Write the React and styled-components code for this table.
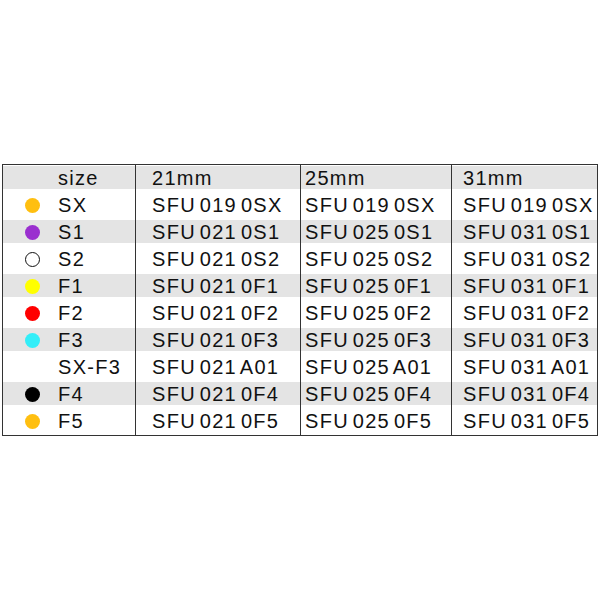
import styled, { createGlobalStyle } from "styled-components";

const GlobalStyle = createGlobalStyle`
  body {
    margin: 0;
    background: #fff;
    font-family: "Liberation Sans", Arial, sans-serif;
  }
`;

const Page = styled.div`
  min-height: 600px;
  display: flex;
  align-items: center;
  justify-content: center;
`;

const Table = styled.div`
  width: 596px;
  box-sizing: border-box;
  border: 1.5px solid #333;
`;

const Row = styled.div`
  display: grid;
  grid-template-columns: 132px 165px 151px 145px;
  height: 27px;
  background: ${({ $shade }) =>
    $shade
      ? "linear-gradient(#fff 0, #fff 1px, #e4e4e4 1px, #e4e4e4 24px, #fff 24px)"
      : "#fff"};
`;

const Cell = styled.div`
  display: flex;
  align-items: center;
  font-size: 20px;
  letter-spacing: 1.3px;
  word-spacing: -3px;
  color: #111;
  white-space: nowrap;
  padding-left: ${({ $pad }) => $pad}px;
  border-left: ${({ $first }) => ($first ? "none" : "1.5px solid #333")};
`;

const Dot = styled.span`
  width: 15px;
  height: 15px;
  border-radius: 50%;
  box-sizing: border-box;
  flex: none;
  margin-right: 18px;
  background: ${({ $color }) => $color || "transparent"};
  border: ${({ $ring }) => ($ring ? "1.5px solid #111" : "none")};
`;

const rows = [
  { label: "SX", color: "#ffbf10", codes: ["SFU 019 0SX", "SFU 019 0SX", "SFU 019 0SX"] },
  { label: "S1", color: "#9a2fcf", codes: ["SFU 021 0S1", "SFU 025 0S1", "SFU 031 0S1"] },
  { label: "S2", ring: true, codes: ["SFU 021 0S2", "SFU 025 0S2", "SFU 031 0S2"] },
  { label: "F1", color: "#ffff00", codes: ["SFU 021 0F1", "SFU 025 0F1", "SFU 031 0F1"] },
  { label: "F2", color: "#ff0000", codes: ["SFU 021 0F2", "SFU 025 0F2", "SFU 031 0F2"] },
  { label: "F3", color: "#33eef8", codes: ["SFU 021 0F3", "SFU 025 0F3", "SFU 031 0F3"] },
  { label: "SX-F3", codes: ["SFU 021 A01", "SFU 025 A01", "SFU 031 A01"] },
  { label: "F4", color: "#000", codes: ["SFU 021 0F4", "SFU 025 0F4", "SFU 031 0F4"] },
  { label: "F5", color: "#ffbf10", codes: ["SFU 021 0F5", "SFU 025 0F5", "SFU 031 0F5"] },
];

const pads = [16, 4, 11];

export default function App() {
  return (
    <>
      <GlobalStyle />
      <Page>
        <Table>
          <Row $shade>
            <Cell $first $pad={55}>size</Cell>
            {["21mm", "25mm", "31mm"].map((h, i) => (
              <Cell key={h} $pad={pads[i]}>{h}</Cell>
            ))}
          </Row>
          {rows.map((r, idx) => (
            <Row key={r.label} $shade={idx % 2 === 1}>
              <Cell $first $pad={r.color || r.ring ? 22 : 55}>
                {(r.color || r.ring) && <Dot $color={r.color} $ring={r.ring} />}
                {r.label}
              </Cell>
              {r.codes.map((c, i) => (
                <Cell key={i} $pad={pads[i]}>{c}</Cell>
              ))}
            </Row>
          ))}
        </Table>
      </Page>
    </>
  );
}
